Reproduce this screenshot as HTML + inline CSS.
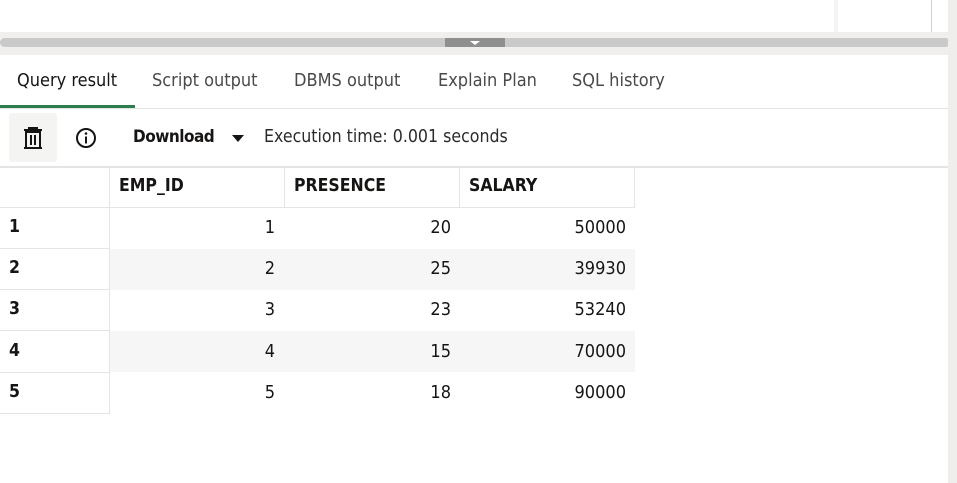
<!DOCTYPE html>
<html><head><style>
body{margin:0;width:957px;height:483px;position:relative;overflow:hidden;background:#fff;font-family:"DejaVu Sans Condensed","Liberation Sans",sans-serif;color:#161513}
.a{position:absolute}
.tab{position:absolute;top:70px;font-size:18px;color:#4a4a48}
.cell{position:absolute;font-size:17.5px;box-sizing:border-box}
.n{font-size:18px}
</style></head><body>
<div class="a" style="left:834px;top:0;width:4px;height:32px;background:#f4f4f4"></div>
<div class="a" style="left:931px;top:0;width:1px;height:32px;background:#d0d0d0"></div>
<div class="a" style="left:0;top:32px;width:950px;height:23px;background:#f0efee"></div>
<div class="a" style="left:0;top:38px;width:950px;height:9px;background:#c9c9c9;border-radius:5px"></div>
<div class="a" style="left:445px;top:38px;width:60px;height:9px;background:#8f8f8f"></div>
<div class="a" style="left:470px;top:41px;width:0;height:0;border-left:5px solid transparent;border-right:5px solid transparent;border-top:4px solid #fff"></div>
<div class="a" style="left:948px;top:0;width:9px;height:483px;background:#efeeed"></div>
<div class="tab" style="left:17px;color:#161513">Query result</div>
<div class="tab" style="left:152px">Script output</div>
<div class="tab" style="left:294px">DBMS output</div>
<div class="tab" style="left:438px">Explain Plan</div>
<div class="tab" style="left:572px">SQL history</div>
<div class="a" style="left:0;top:105px;width:135px;height:3px;background:#2e7d4f"></div>
<div class="a" style="left:0;top:108px;width:948px;height:1px;background:#e4e4e4"></div>
<div class="a" style="left:9px;top:113px;width:48px;height:49px;background:#f4f4f3;border-radius:3px"></div>
<svg class="a" style="left:21px;top:126px" width="24" height="24" viewBox="0 0 24 24"><path d="M3 4h18M8 4V2h8v2M5 6h14v16H5zM10 9v10M14 9v10" stroke="#161513" stroke-width="2" fill="none"/><path d="M3 22h18" stroke="#161513" stroke-width="2"/></svg>
<svg class="a" style="left:75px;top:127px" width="22" height="22" viewBox="0 0 22 22"><circle cx="11" cy="11" r="9" stroke="#161513" stroke-width="2" fill="none"/><circle cx="11" cy="6.5" r="1.3" fill="#161513"/><path d="M11 9.5v7" stroke="#161513" stroke-width="2"/></svg>
<div class="a" style="left:133px;top:127px;font-size:17px;font-weight:bold;color:#161513;letter-spacing:-0.5px">Download</div>
<div class="a" style="left:232px;top:135px;border-left:6px solid transparent;border-right:6px solid transparent;border-top:7px solid #161513"></div>
<div class="a" style="left:264px;top:127px;font-size:17.6px;color:#2b2b2b">Execution time: 0.001 seconds</div>
<div class="a" style="left:0;top:166px;width:948px;height:2px;background:#e4e4e4"></div>
<div class="a" style="left:109px;top:168px;width:1px;height:246px;background:#e4e4e4"></div>
<div class="a" style="left:284px;top:168px;width:1px;height:40px;background:#e4e4e4"></div>
<div class="a" style="left:459px;top:168px;width:1px;height:40px;background:#e4e4e4"></div>
<div class="a" style="left:634px;top:168px;width:1px;height:40px;background:#e4e4e4"></div>
<div class="a" style="left:0;top:207px;width:635px;height:1px;background:#e4e4e4"></div>
<div class="a" style="left:110px;top:249px;width:525px;height:41px;background:#f6f6f6"></div>
<div class="a" style="left:110px;top:331px;width:525px;height:41px;background:#f6f6f6"></div>
<div class="a" style="left:0;top:248px;width:109px;height:1px;background:#e4e4e4"></div>
<div class="a" style="left:0;top:289px;width:109px;height:1px;background:#e4e4e4"></div>
<div class="a" style="left:0;top:330px;width:109px;height:1px;background:#e4e4e4"></div>
<div class="a" style="left:0;top:372px;width:109px;height:1px;background:#e4e4e4"></div>
<div class="a" style="left:0;top:413px;width:110px;height:1px;background:#e4e4e4"></div>
<div class="cell" style="left:119px;top:176px;font-weight:bold">EMP_ID</div>
<div class="cell" style="left:294px;top:176px;font-weight:bold">PRESENCE</div>
<div class="cell" style="left:469px;top:176px;font-weight:bold">SALARY</div>
<div class="cell" style="left:9px;top:217px;font-weight:bold">1</div>
<div class="cell" style="left:9px;top:258px;font-weight:bold">2</div>
<div class="cell" style="left:9px;top:299px;font-weight:bold">3</div>
<div class="cell" style="left:9px;top:341px;font-weight:bold">4</div>
<div class="cell" style="left:9px;top:382px;font-weight:bold">5</div>
<div class="cell n" style="left:110px;width:165px;text-align:right;top:217px">1</div>
<div class="cell n" style="left:110px;width:165px;text-align:right;top:258px">2</div>
<div class="cell n" style="left:110px;width:165px;text-align:right;top:299px">3</div>
<div class="cell n" style="left:110px;width:165px;text-align:right;top:341px">4</div>
<div class="cell n" style="left:110px;width:165px;text-align:right;top:382px">5</div>
<div class="cell n" style="left:285px;width:166px;text-align:right;top:217px">20</div>
<div class="cell n" style="left:285px;width:166px;text-align:right;top:258px">25</div>
<div class="cell n" style="left:285px;width:166px;text-align:right;top:299px">23</div>
<div class="cell n" style="left:285px;width:166px;text-align:right;top:341px">15</div>
<div class="cell n" style="left:285px;width:166px;text-align:right;top:382px">18</div>
<div class="cell n" style="left:460px;width:166px;text-align:right;top:217px">50000</div>
<div class="cell n" style="left:460px;width:166px;text-align:right;top:258px">39930</div>
<div class="cell n" style="left:460px;width:166px;text-align:right;top:299px">53240</div>
<div class="cell n" style="left:460px;width:166px;text-align:right;top:341px">70000</div>
<div class="cell n" style="left:460px;width:166px;text-align:right;top:382px">90000</div>
</body></html>
